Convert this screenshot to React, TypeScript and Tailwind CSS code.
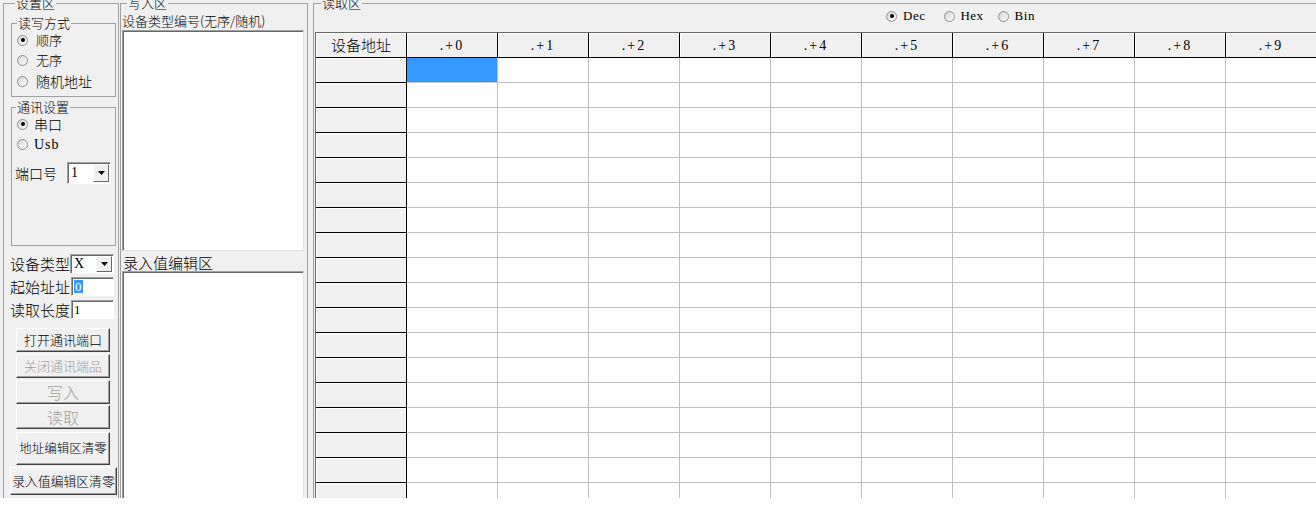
import React from "react";

const Radio = ({ checked }: { checked?: boolean }) => (
  <span className="w-[11px] h-[11px] rounded-full border border-[#8f8f8f] bg-gradient-to-br from-[#d4d4d4] to-white flex items-center justify-center shrink-0">
    {checked && <span className="w-[4px] h-[4px] rounded-full bg-black" />}
  </span>
);

const Arrow = () => (
  <span className="w-[16px] h-full bg-[#f0f0f0] border border-t-white border-l-white border-r-[#696969] border-b-[#696969] flex items-center justify-center">
    <svg width="7" height="4" viewBox="0 0 7 4">
      <path d="M0 0H7L3.5 4Z" fill="#000" />
    </svg>
  </span>
);

const Select = ({ value, w }: { value: string; w: string }) => (
  <div className={`${w} h-full bg-white border border-t-[#a0a0a0] border-l-[#a0a0a0] border-r-white border-b-white flex items-stretch p-[1px] shadow-[inset_1px_1px_0_#696969]`}>
    <span className="flex-1 pl-[2px] font-['Liberation_Serif',serif] text-[14px] leading-[16px] flex items-center">{value}</span>
    <Arrow />
  </div>
);

const Btn = ({ label, disabled, cls }: { label: string; disabled?: boolean; cls: string }) => (
  <div
    className={`${cls} font-light bg-[#f0f0f0] border border-t-white border-l-white border-r-[#404040] border-b-[#404040] shadow-[inset_-1px_-1px_0_#a0a0a0] flex items-center justify-center ${disabled ? "text-[#a0a0a0]" : "text-black"}`}
  >
    {label}
  </div>
);

const cols = [".+0", ".+1", ".+2", ".+3", ".+4", ".+5", ".+6", ".+7", ".+8", ".+9"];

export default function App() {
  const rows = Array.from({ length: 18 });
  return (
    <div className="w-[1316px] h-[506px] bg-white font-['Noto_Sans_CJK_SC',sans-serif] text-black">
      <div className="w-[1316px] h-[498px] bg-[#f0f0f0] flex overflow-hidden">
        {/* Left settings */}
        <div className="w-[120px] shrink-0 pl-[3px]">
          <fieldset className="mt-[-4px] w-[116px] h-[540px] border border-[#a0a0a0] flex flex-col">
            <legend className="ml-[11px] px-[1px] text-[13px] leading-[14px] font-light">设置区</legend>
            <fieldset className="mt-[6px] ml-[7px] w-[105px] h-[81px] border border-[#a0a0a0]">
              <legend className="ml-[5px] px-[1px] text-[13px] leading-[14px] font-light">读写方式</legend>
              <div className="flex flex-col font-light">
                <div className="h-[20px] flex items-center gap-[8px] pl-[5px] text-[13px]"><Radio checked />顺序</div>
                <div className="h-[20px] flex items-center gap-[8px] pl-[5px] text-[13px]"><Radio />无序</div>
                <div className="h-[22px] flex items-center gap-[8px] pl-[5px] text-[14px]"><Radio />随机地址</div>
              </div>
            </fieldset>
            <fieldset className="mt-[3px] ml-[7px] w-[105px] h-[146px] border border-[#a0a0a0]">
              <legend className="ml-[4px] px-[1px] text-[13px] leading-[14px] font-light">通讯设置</legend>
              <div className="flex flex-col">
                <div className="mt-[1px] h-[18px] flex items-center gap-[6px] pl-[5px] text-[14px] leading-[16px] font-light"><Radio checked />串口</div>
                <div className="h-[23px] flex items-center gap-[6px] pl-[5px] text-[14px] tracking-[1px] font-['Liberation_Serif',serif]"><Radio />Usb</div>
                <div className="mt-[6px] h-[22px] flex items-center pl-[3px] text-[14px]">
                  <span className="w-[52px] font-light">端口号</span>
                  <Select value="1" w="w-[44px]" />
                </div>
              </div>
            </fieldset>
            <div className="mt-[8px] ml-[6px] h-[20px] flex items-center text-[15px] leading-[16px]">
              <span className="w-[60px] font-light">设备类型</span>
              <Select value="X" w="w-[44px]" />
            </div>
            <div className="mt-[3px] ml-[6px] h-[19px] flex items-center text-[15px] leading-[16px]">
              <span className="w-[61px] font-light">起始址址</span>
              <div className="w-[43px] h-full bg-white border border-t-[#a0a0a0] border-l-[#a0a0a0] border-r-white border-b-white shadow-[inset_1px_1px_0_#696969] flex items-center pl-[2px]">
                <span className="bg-[#3399ff] text-white font-['Liberation_Serif',serif] text-[13px] leading-[13px] px-[1px]">0</span>
              </div>
            </div>
            <div className="mt-[4px] ml-[6px] h-[19px] flex items-center text-[15px] leading-[16px]">
              <span className="w-[61px] font-light">读取长度</span>
              <div className="w-[43px] h-full bg-white border border-t-[#a0a0a0] border-l-[#a0a0a0] border-r-white border-b-white shadow-[inset_1px_1px_0_#696969] flex items-center pl-[2px]">
                <span className="font-['Liberation_Serif',serif] text-[13px] leading-[13px]">1</span>
              </div>
            </div>
            <Btn label="打开通讯端口" cls="mt-[9px] ml-[12px] w-[94px] h-[24px] text-[13px]" />
            <Btn label="关闭通讯端品" disabled cls="mt-[2px] ml-[12px] w-[94px] h-[24px] text-[13px]" />
            <Btn label="写入" disabled cls="mt-[2px] ml-[12px] w-[94px] h-[24px] text-[16px]" />
            <Btn label="读取" disabled cls="mt-[1px] ml-[12px] w-[94px] h-[24px] text-[16px]" />
            <Btn label="地址编辑区清零" cls="mt-[3px] ml-[12px] w-[94px] h-[33px] text-[12.5px]" />
            <Btn label="录入值编辑区清零" cls="mt-[2px] ml-[6px] w-[107px] h-[28px] text-[12.8px]" />
          </fieldset>
        </div>

        {/* Middle write area */}
        <div className="w-[193px] shrink-0">
          <fieldset className="mt-[-4px] w-[188px] h-[540px] border border-[#a0a0a0] flex flex-col">
            <legend className="ml-[6px] px-[1px] text-[13px] leading-[14px] font-light">写入区</legend>
            <div className="mt-[4px] ml-[1px] text-[13px] leading-[14px] font-light">设备类型编号(无序/随机)</div>
            <div className="mt-[2px] ml-[1px] w-[182px] h-[221px] bg-white border border-t-[#a0a0a0] border-l-[#a0a0a0] border-r-[#e3e3e3] border-b-[#e3e3e3] shadow-[inset_1px_1px_0_#696969]" />
            <div className="mt-[4px] ml-[2px] text-[15px] leading-[16px] font-light">录入值编辑区</div>
            <div className="ml-[1px] w-[182px] h-[240px] bg-white border border-t-[#a0a0a0] border-l-[#a0a0a0] border-r-[#e3e3e3] border-b-[#e3e3e3] shadow-[inset_1px_1px_0_#696969]" />
          </fieldset>
        </div>

        {/* Right read area */}
        <div className="flex-1 min-w-0">
          <fieldset className="mt-[-4px] w-[1100px] h-[540px] border border-[#a0a0a0] flex flex-col">
            <legend className="ml-[7px] px-[1px] text-[13px] leading-[14px] font-light">读取区</legend>
            <div className="h-[12px] ml-[572px] flex items-center font-['Liberation_Serif',serif] text-[13px] leading-[14px] tracking-[0.5px]">
              <div className="flex items-center gap-[6px]"><Radio checked />Dec</div>
              <div className="ml-[19px] flex items-center gap-[5px]"><Radio />Hex</div>
              <div className="ml-[14px] flex items-center gap-[6px]"><Radio />Bin</div>
            </div>
            <div className="mt-[10px] ml-[1px] border-l border-t border-l-[#696969] border-t-[#696969]">
              <div className="flex h-[25px]">
                <div className="w-[91px] shrink-0 bg-[#f0f0f0] border-r border-b border-black shadow-[inset_1px_1px_0_#fff] flex items-center justify-center text-[15px] font-light">设备地址</div>
                {cols.map((c) => (
                  <div key={c} className="w-[91px] shrink-0 bg-[#f0f0f0] border-r border-b border-black shadow-[inset_1px_1px_0_#fff] flex items-center justify-center font-['Liberation_Serif',serif] text-[14px] tracking-[2px]">{c}</div>
                ))}
              </div>
              {rows.map((_, r) => (
                <div key={r} className="flex h-[25px]">
                  <div className="w-[91px] shrink-0 bg-[#f0f0f0] border-r border-b border-black shadow-[inset_1px_1px_0_#fff]" />
                  {cols.map((c, i) => (
                    <div
                      key={c}
                      className={`w-[91px] shrink-0 border-r border-b border-[#c0c0c0] ${r === 0 && i === 0 ? "bg-[#3399ff]" : "bg-white"}`}
                    />
                  ))}
                </div>
              ))}
            </div>
          </fieldset>
        </div>
      </div>
    </div>
  );
}
